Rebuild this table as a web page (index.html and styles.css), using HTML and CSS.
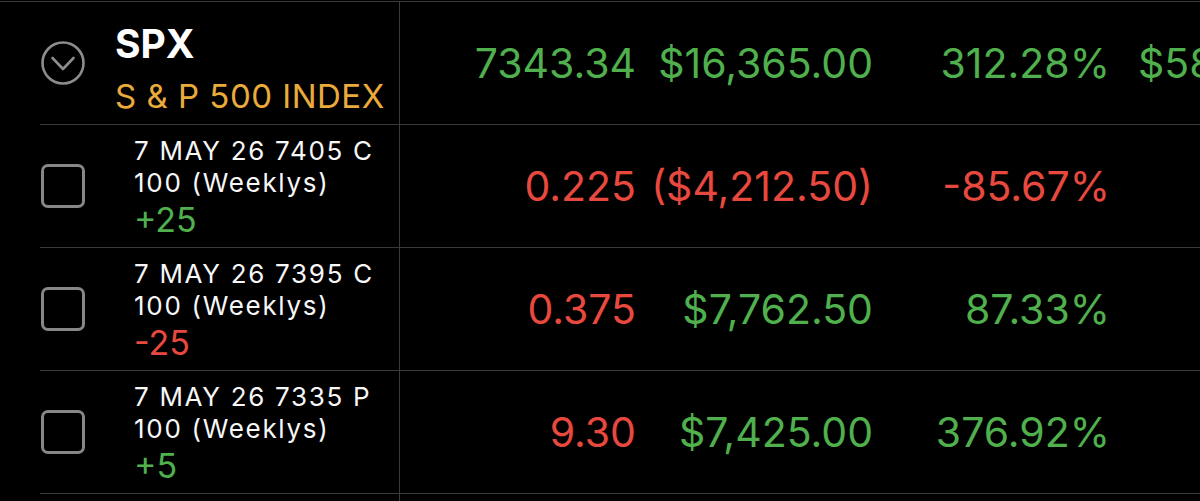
FILE: index.html
```html
<!DOCTYPE html>
<html lang="en">
<head>
    <meta charset="UTF-8">
    <title>Positions</title>
    <link rel="stylesheet" href="styles.css">
</head>
<body>
    <div class="positions">
        <div class="row head">
            <div class="lead">
                <span class="toggle">
                    <svg width="44" height="44" viewBox="0 0 44 44">
                        <circle cx="22" cy="22" r="20.5" fill="none" stroke="#8c8c8c" stroke-width="2.6"/>
                        <polyline points="11.5,17 22,28 32.5,17" fill="none" stroke="#8c8c8c" stroke-width="2.6" stroke-linecap="round" stroke-linejoin="round"/>
                    </svg>
                </span>
                <div class="name">
                    <div class="sym">SPX</div>
                    <div class="desc">S &amp; P 500 INDEX</div>
                </div>
            </div>
            <div class="cols">
                <span class="up">7343.34</span>
                <span class="up">$16,365.00</span>
                <span class="up">312.28%</span>
                <span class="up extra">$58</span>
            </div>
        </div>

        <div class="row">
            <div class="lead">
                <span class="check"></span>
                <div class="leg">
                    <div>7 MAY 26 7405 C</div>
                    <div>100 (Weeklys)</div>
                    <div class="qty up">+25</div>
                </div>
            </div>
            <div class="cols">
                <span class="down">0.225</span>
                <span class="down">($4,212.50)</span>
                <span class="down">-85.67%</span>
                <span></span>
            </div>
        </div>

        <div class="row">
            <div class="lead">
                <span class="check"></span>
                <div class="leg">
                    <div>7 MAY 26 7395 C</div>
                    <div>100 (Weeklys)</div>
                    <div class="qty down">-25</div>
                </div>
            </div>
            <div class="cols">
                <span class="down">0.375</span>
                <span class="up">$7,762.50</span>
                <span class="up">87.33%</span>
                <span></span>
            </div>
        </div>

        <div class="row">
            <div class="lead">
                <span class="check"></span>
                <div class="leg">
                    <div>7 MAY 26 7335 P</div>
                    <div>100 (Weeklys)</div>
                    <div class="qty up">+5</div>
                </div>
            </div>
            <div class="cols">
                <span class="down">9.30</span>
                <span class="up">$7,425.00</span>
                <span class="up">376.92%</span>
                <span></span>
            </div>
        </div>

        <div class="row">
            <div class="lead"></div>
            <div class="cols"></div>
        </div>
    </div>
</body>
</html>
```

FILE: styles.css
```css
* {
    margin: 0;
    padding: 0;
    box-sizing: border-box;
}
html, body {
    background: #000;
    overflow: hidden;
}
body {
    width: 1200px;
    height: 501px;
    font-family: Inter, "Liberation Sans", sans-serif;
    color: #f7f7f7;
}
.positions {
    margin-top: 1px;
    border-top: 1px solid #3a3a3a;
}
/* one row = left label cell + number columns */
.row {
    display: grid;
    grid-template-columns: 400px 1fr;
    height: 123px;
}
.lead {
    margin-left: 40px;
    display: flex;
    align-items: center;
    border-bottom: 1px solid #3a3a3a;
    border-right: 1px solid #3a3a3a;
}
.cols {
    display: grid;
    grid-template-columns: 236px 237px 237px 1fr;
    align-items: center;
    border-bottom: 1px solid #3a3a3a;
    font-size: 41px;
    white-space: nowrap;
}
.cols span {
    text-align: right;
}
.cols span.extra {
    text-align: left;
    padding-left: 28px;
}
.up {
    color: #4fb04d;
}
.down {
    color: #e8493f;
}
/* header */
.toggle {
    display: block;
    width: 44px;
    height: 44px;
    margin-left: 1px;
}
.toggle svg {
    display: block;
}
.name {
    align-self: flex-start;
    margin-left: 30px;
    padding-top: 22px;
}
.sym {
    font-size: 39px;
    font-weight: 700;
    line-height: 40px;
    color: #fff;
}
.desc {
    margin-top: 12px;
    font-size: 33px;
    line-height: 40px;
    color: #ebab3c;
    letter-spacing: 0.5px;
}
/* option legs */
.check {
    display: block;
    width: 44px;
    height: 44px;
    margin-left: 1px;
    border: 3px solid #878787;
    border-radius: 7px;
}
.leg {
    margin-left: 49px;
    margin-top: 2px;
    font-size: 26px;
    line-height: 32px;
    letter-spacing: 1.7px;
}
.leg .qty {
    font-size: 34px;
    line-height: 41px;
    letter-spacing: 0;
}
```
